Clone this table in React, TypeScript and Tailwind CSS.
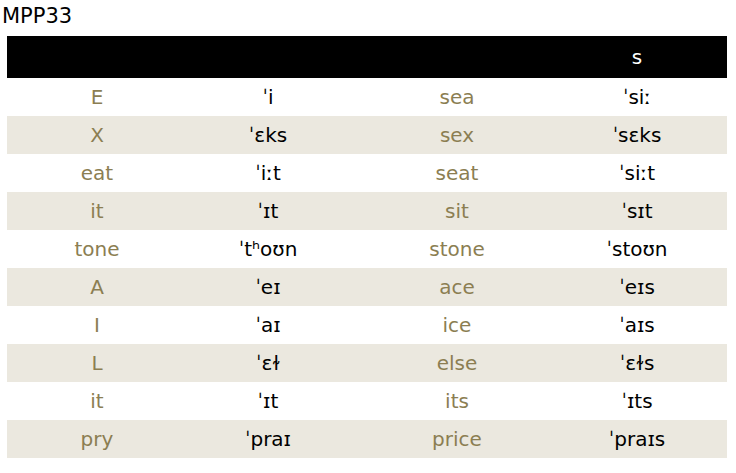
import React from "react";

const rows: [string, string, string, string][] = [
  ["E", "ˈi", "sea", "ˈsiː"],
  ["X", "ˈɛks", "sex", "ˈsɛks"],
  ["eat", "ˈiːt", "seat", "ˈsiːt"],
  ["it", "ˈɪt", "sit", "ˈsɪt"],
  ["tone", "ˈtʰoʊn", "stone", "ˈstoʊn"],
  ["A", "ˈeɪ", "ace", "ˈeɪs"],
  ["I", "ˈaɪ", "ice", "ˈaɪs"],
  ["L", "ˈɛɫ", "else", "ˈɛɫs"],
  ["it", "ˈɪt", "its", "ˈɪts"],
  ["pry", "ˈpraɪ", "price", "ˈpraɪs"],
];

export default function App() {
  return (
    <div className="w-[736px] h-[473px] bg-white font-['DejaVu_Sans',sans-serif] overflow-hidden">
      {/* title */}
      <div className="h-[36px] pl-[2px] pt-[2px] text-[21px] leading-[28px] text-black">MPP33</div>

      {/* table */}
      <div className="mx-[7px] w-[720px]">
        <div className="grid grid-cols-4 h-[42px] bg-black text-white text-[20px] items-end pb-[6px]">
          <div />
          <div />
          <div />
          <div className="text-center">s</div>
        </div>
        {rows.map((r, i) => (
          <div
            key={i}
            className={`grid grid-cols-4 h-[38px] items-center text-[20px] ${i % 2 === 1 ? "bg-[#ebe8df]" : "bg-white"}`}
          >
            <div className="text-center text-[#8b7e52]">{r[0]}</div>
            <div className="text-center text-black pr-[18px]">{r[1]}</div>
            <div className="text-center text-[#8b7e52]">{r[2]}</div>
            <div className="text-center text-black">{r[3]}</div>
          </div>
        ))}
      </div>
    </div>
  );
}
